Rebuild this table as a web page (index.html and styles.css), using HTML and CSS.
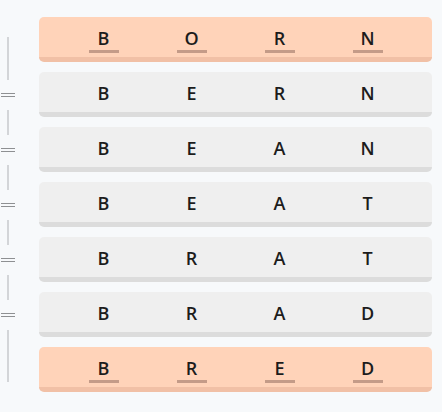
FILE: index.html
```html
<!DOCTYPE html>
<html>
<head>
<meta charset="utf-8">
<link rel="stylesheet" href="styles.css">
</head>
<body>
<div class="wrap">
  <div class="rail">
    <div class="seg seg-first"></div>
    <div class="eq"><span></span><span></span></div>
    <div class="seg"></div>
    <div class="eq"><span></span><span></span></div>
    <div class="seg"></div>
    <div class="eq"><span></span><span></span></div>
    <div class="seg"></div>
    <div class="eq"><span></span><span></span></div>
    <div class="seg"></div>
    <div class="eq"><span></span><span></span></div>
    <div class="seg seg-last"></div>
  </div>
  <div class="list">
    <div class="card hl"><div class="cell">B</div><div class="cell">O</div><div class="cell">R</div><div class="cell">N</div></div>
    <div class="card"><div class="cell">B</div><div class="cell">E</div><div class="cell">R</div><div class="cell">N</div></div>
    <div class="card"><div class="cell">B</div><div class="cell">E</div><div class="cell">A</div><div class="cell">N</div></div>
    <div class="card"><div class="cell">B</div><div class="cell">E</div><div class="cell">A</div><div class="cell">T</div></div>
    <div class="card"><div class="cell">B</div><div class="cell">R</div><div class="cell">A</div><div class="cell">T</div></div>
    <div class="card"><div class="cell">B</div><div class="cell">R</div><div class="cell">A</div><div class="cell">D</div></div>
    <div class="card hl"><div class="cell">B</div><div class="cell">R</div><div class="cell">E</div><div class="cell">D</div></div>
  </div>
</div>
</body>
</html>
```
FILE: styles.css
```css
html, body {
  margin: 0;
  padding: 0;
  background: #f7f9fb;
}
body {
  font-family: "Open Sans", "Noto Sans", sans-serif;
}
.wrap {
  display: flex;
  align-items: flex-start;
  padding-top: 17px;
}
.rail {
  width: 16px;
  margin-top: 20px;
  margin-right: 23px;
  display: flex;
  flex-direction: column;
  align-items: center;
}
.seg {
  width: 1.5px;
  height: 25px;
  background: #d3d5d8;
}
.seg-first { height: 43px; }
.seg-last { height: 52px; }
.eq {
  height: 30px;
  width: 14px;
  display: flex;
  flex-direction: column;
  justify-content: center;
  gap: 1.5px;
}
.eq span {
  display: block;
  height: 1.5px;
  background: #8e9092;
}
.list {
  width: 393px;
  display: flex;
  flex-direction: column;
  gap: 10px;
}
.card {
  box-sizing: border-box;
  height: 45px;
  border-radius: 5px;
  background: #efefef;
  border-bottom: 5px solid #dcdcdc;
  display: grid;
  grid-template-columns: repeat(4, 88px);
  justify-content: center;
  align-items: start;
  padding-top: 9px;
}
.card.hl {
  background: #ffd3b9;
  border-bottom-color: #f1c0a6;
}
.cell {
  font-size: 18px;
  font-weight: 600;
  line-height: 24px;
  color: #1c1c1c;
  text-align: center;
  position: relative;
}
.card.hl .cell::after {
  content: "";
  position: absolute;
  left: 29px;
  top: 24px;
  width: 30px;
  height: 2.5px;
  background: #c49b88;
}
```
